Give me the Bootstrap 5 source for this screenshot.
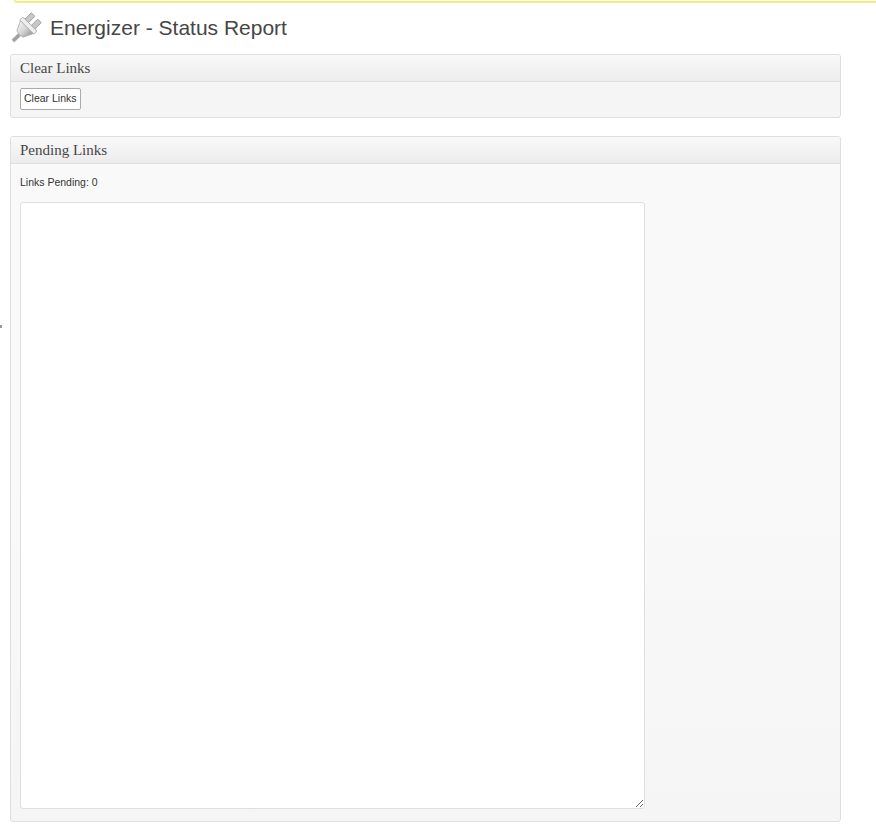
<!DOCTYPE html>
<html lang="en">
<head>
    <meta charset="UTF-8">
    <meta name="viewport" content="width=device-width, initial-scale=1.0">
    <title>Energizer - Status Report</title>
    <link href="https://cdn.jsdelivr.net/npm/bootstrap@5.3.0/dist/css/bootstrap.min.css" rel="stylesheet">
    <style>
        body {
            background: #fff;
            font-family: "Liberation Sans", Arial, sans-serif;
            font-size: 10.5px;
            color: #333;
            height: 830px;
            overflow: hidden;
            position: relative;
        }

        .notice-strip {
            height: 3px;
            margin-left: 14px;
            background: #ffffe0;
            border-left: 1px solid #e6db55;
            border-bottom: 2px solid #f0ea90;
            border-bottom-left-radius: 3px;
        }

        .page-wrap {
            width: 831px;
            margin-left: 10px;
        }

        .page-head {
            height: 51px;
            padding: 9px 0 0 2px;
        }

        .page-head h2 {
            margin: 0;
            font-family: "Liberation Sans", Arial, sans-serif;
            font-size: 21px;
            font-weight: 400;
            line-height: 32px;
            color: #464646;
        }

        .status-box {
            border: 1px solid #dfdfdf;
            border-radius: 3px;
            background: #f5f5f5;
        }

        .status-box .card-header {
            height: 27px;
            padding: 0 9px;
            font-family: "Liberation Serif", Georgia, serif;
            font-size: 15px;
            line-height: 26px;
            color: #464646;
            background: linear-gradient(to bottom, #f9f9f9, #ececec);
            border-bottom: 1px solid #dfdfdf;
            border-radius: 2px 2px 0 0;
        }

        .status-box .card-body {
            padding: 6px 9px 0;
        }

        .clear-box {
            height: 64px;
            margin-bottom: 18px;
        }

        .clear-btn {
            height: 22px;
            padding: 0 3px 2px;
            font-family: "Liberation Sans", Arial, sans-serif;
            font-size: 10.5px;
            line-height: 18px;
            color: #333;
            background: #fff;
            border: 1px solid #aaa;
            border-radius: 2px;
        }

        .pending-box {
            height: 686px;
            background: linear-gradient(to bottom, #f9f9f9 0%, #f9f9f9 50%, #f5f5f5 100%);
        }

        .pending-count {
            margin: 0 0 8px;
            font-size: 10.5px;
            line-height: 24px;
            height: 24px;
            color: #333;
        }

        .pending-area {
            display: block;
            width: 625px;
            height: 607px;
            padding: 2px;
            background: #fff;
            border: 1px solid #dfdfdf;
            border-radius: 3px;
            resize: both;
        }

        .edge-mark {
            position: absolute;
            left: 0;
            top: 325px;
            width: 2px;
            height: 3px;
            background: #999;
        }
    </style>
</head>
<body>
    <div class="notice-strip"></div>
    <div class="edge-mark"></div>
    <div class="page-wrap">
        <div class="page-head d-flex align-items-start gap-2">
            <svg width="30" height="32" viewBox="2 -1 30 32" aria-hidden="true">
                <defs>
                    <linearGradient id="plugBody" x1="0" y1="0" x2="1" y2="0">
                        <stop offset="0" stop-color="#f2f2f2"/>
                        <stop offset="0.5" stop-color="#d6d6d6"/>
                        <stop offset="1" stop-color="#9a9a9a"/>
                    </linearGradient>
                </defs>
                <g transform="rotate(45 15 16)">
                    <rect x="8" y="0" width="5" height="10" rx="0.8" fill="#c8c8c8" stroke="#8a8a8a" stroke-width="0.7"/>
                    <rect x="17" y="0" width="5" height="10" rx="0.8" fill="#c8c8c8" stroke="#8a8a8a" stroke-width="0.7"/>
                    <rect x="5" y="9" width="20" height="4.5" rx="1.2" fill="#eee" stroke="#9a9a9a" stroke-width="0.7"/>
                    <path d="M6 13.5 H24 L19.5 23 Q15 25 10.5 23 Z" fill="url(#plugBody)" stroke="#a5a5a5" stroke-width="0.7"/>
                    <rect x="13.2" y="24" width="3.6" height="9" fill="#a0a0a0" stroke="#c4c4c4" stroke-width="0.4"/>
                </g>
            </svg>
            <h2>Energizer - Status Report</h2>
        </div>

        <div class="card status-box clear-box">
            <div class="card-header">Clear Links</div>
            <div class="card-body">
                <button type="button" class="btn clear-btn">Clear Links</button>
            </div>
        </div>

        <div class="card status-box pending-box">
            <div class="card-header">Pending Links</div>
            <div class="card-body">
                <p class="pending-count">Links Pending: 0</p>
                <textarea class="pending-area"></textarea>
            </div>
        </div>
    </div>
</body>
</html>
